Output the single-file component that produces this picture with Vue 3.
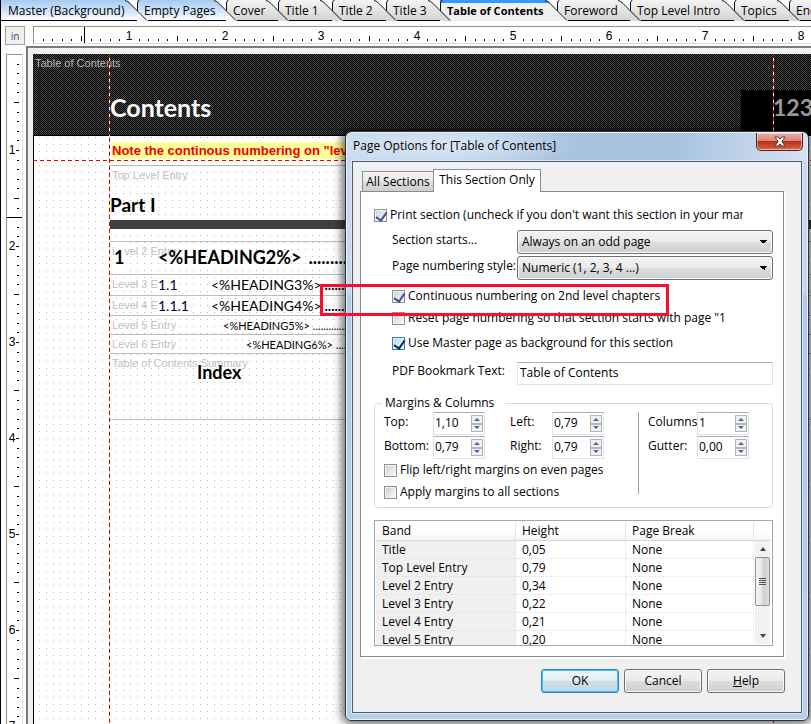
<script setup>
import { ref } from 'vue'

const docTabs = [
  { name: 'Master (Background)', width: 136, kind: 'blue' },
  { name: 'Empty Pages', width: 89, kind: 'blue' },
  { name: 'Cover', width: 52, kind: 'grey' },
  { name: 'Title 1', width: 54, kind: 'grey' },
  { name: 'Title 2', width: 54, kind: 'grey' },
  { name: 'Title 3', width: 54, kind: 'grey' },
  { name: 'Table of Contents', width: 117, kind: 'active' },
  { name: 'Foreword', width: 73, kind: 'grey' },
  { name: 'Top Level Intro', width: 104, kind: 'grey' },
  { name: 'Topics', width: 55, kind: 'grey' },
  { name: 'Endnotes', width: 90, kind: 'grey' }
]
const feet = { blue: '#f4f9ff', grey: '#d8d8d8', active: '#f0f0f0' }

// ten ticks to the inch at 96 px; every tenth is a number, every fifth a long tick
const ticks = Array.from({ length: 120 }, (_, i) => ({ n: i + 1, at: Math.round((i + 1) * 9.6) }))

const entries = [
  { cls: 'lv2', label: 'Level 2 Entry', num: '1', text: '<%HEADING2%>' },
  { cls: 'lv3', label: 'Level 3 Entry', num: '1.1', text: '<%HEADING3%>' },
  { cls: 'lv4', label: 'Level 4 Entry', num: '1.1.1', text: '<%HEADING4%>' },
  { cls: 'lv5', label: 'Level 5 Entry', num: '', text: '<%HEADING5%>' },
  { cls: 'lv6', label: 'Level 6 Entry', num: '', text: '<%HEADING6%>' }
]
const leader = '.'.repeat(60)

const bands = [
  ['Title', '0,05', 'None'],
  ['Top Level Entry', '0,79', 'None'],
  ['Level 2 Entry', '0,34', 'None'],
  ['Level 3 Entry', '0,22', 'None'],
  ['Level 4 Entry', '0,21', 'None'],
  ['Level 5 Entry', '0,20', 'None']
]

const spins = [
  { id: 'm-top', label: 'Top:', value: '1,10', area: 'a' },
  { id: 'm-left', label: 'Left:', value: '0,79', area: 'b' },
  { id: 'm-cols', label: 'Columns:', value: '1', area: 'c' },
  { id: 'm-bottom', label: 'Bottom:', value: '0,79', area: 'a' },
  { id: 'm-right', label: 'Right:', value: '0,79', area: 'b' },
  { id: 'm-gutter', label: 'Gutter:', value: '0,00', area: 'c' }
]

const printSection = ref(true)
const continuous = ref(true)
const reset = ref(false)
const useMaster = ref(true)
const flip = ref(false)
const applyAll = ref(false)
const bookmark = ref('Table of Contents')
</script>

<template>
  <div class="app">
    <nav class="doc-tabs">
      <button v-for="t in docTabs" :key="t.name" class="doc-tab" :class="t.kind" :style="{ width: t.width + 'px' }">
        {{ t.name }}
        <svg class="slant" width="24" height="21" viewBox="0 0 24 21">
          <path d="M0 0H12V11L5 3Q3 1 0 0Z" fill="#fcfcfc" />
          <path d="M12 9L23 20V21H12Z" :fill="feet[t.kind]" />
          <path d="M0 0.5Q3 1 5 3.5L22 20.5" fill="none" stroke="#111" />
          <path d="M12.5 11V3Q12.5 1 14.5 0" fill="none" stroke="#111" />
        </svg>
      </button>
    </nav>

    <div class="top-ruler-row">
      <button class="unit">in</button>
      <svg class="h-ruler" height="18">
        <g v-for="t in ticks" :key="t.n">
          <text v-if="t.n % 10 === 0" :x="t.at - 1" y="13" text-anchor="middle" class="rule-num">{{ t.n / 10 }}</text>
          <rect v-else-if="t.n % 5 === 0" :x="t.at - 1" y="9" width="1" height="5" />
          <rect v-else :x="t.at - 1" y="12" width="1" height="2" />
        </g>
        <rect x="50" y="0" width="1" height="18" />
      </svg>
    </div>

    <div class="work">
      <svg class="v-ruler" width="17">
        <g v-for="t in ticks" :key="t.n">
          <text v-if="t.n % 10 === 0" x="5" :y="t.at + 3" text-anchor="middle" class="rule-num">{{ t.n / 10 }}</text>
          <rect v-if="t.n % 10 === 0" x="9" :y="t.at - 1" width="3" height="1" />
          <rect v-else-if="t.n % 5 === 0" x="7" :y="t.at - 1" width="5" height="1" />
          <rect v-else x="10" :y="t.at - 1" width="2" height="1" />
        </g>
        <rect x="0" y="162" width="17" height="1" />
      </svg>

      <main class="canvas">
        <div class="page">
          <header class="band-title">
            <span class="tag">Table of Contents</span>
            <h1>Contents</h1>
            <span class="page-no">123</span>
          </header>
          <div class="body">
            <div class="note-band"><mark>Note the continous numbering on "level 2" chapters</mark></div>
            <section class="band top-band">
              <span class="label">Top Level Entry</span>
              <h2>Part I</h2>
              <div class="bar"></div>
            </section>
            <section v-for="e in entries" :key="e.cls" class="band entry" :class="e.cls">
              <span class="label">{{ e.label }}</span>
              <span class="num"><b>{{ e.num }}</b></span>
              <span class="text">{{ e.text }}</span>
              <span class="leader">{{ leader }}</span>
            </section>
            <section class="band summary">
              <span class="label">Table of Contents Summary</span>
              <h2>Index</h2>
            </section>
            <section class="band"></section>
          </div>
          <i class="guide left"></i>
          <i class="guide right"></i>
          <i class="guide across"></i>
        </div>
      </main>
    </div>

    <div class="dialog" role="dialog" aria-labelledby="dlg-title">
      <div class="titlebar">
        <span id="dlg-title">Page Options for [Table of Contents]</span>
        <button class="close" aria-label="Close">
          <svg width="12" height="11" viewBox="0 0 12 11">
            <path d="M1 1H4.2L6 3.2 7.8 1H11L7.8 5.5 11 10H7.8L6 7.8 4.2 10H1L4.2 5.5Z" fill="#fff" stroke="#4a3f48" />
          </svg>
        </button>
      </div>
      <div class="client">
        <div class="tabs" role="tablist">
          <button role="tab" aria-selected="false" class="tab">All Sections</button>
          <button role="tab" aria-selected="true" class="tab on">This Section Only</button>
        </div>
        <div class="panel">
          <label class="check r26"><input v-model="printSection" type="checkbox" /><span class="clip-print">Print section (uncheck if you don't want this section in your manual)</span></label>
          <div class="field">
            <label for="starts">Section starts...</label>
            <select id="starts"><option>Always on an odd page</option></select>
          </div>
          <div class="field">
            <label for="style">Page numbering style:</label>
            <select id="style"><option>Numeric (1, 2, 3, 4 ...)</option></select>
          </div>
          <div class="checks">
            <label class="check"><input v-model="continuous" type="checkbox" /><span>Continuous numbering on 2nd level chapters</span></label>
            <label class="check"><input v-model="reset" type="checkbox" /><span class="clip-reset">Reset page numbering so that section starts with page "1"</span></label>
            <label class="check r28"><input v-model="useMaster" type="checkbox" class="hot" /><span>Use Master page as background for this section</span></label>
          </div>
          <div class="field r30">
            <label for="bookmark">PDF Bookmark Text:</label>
            <input id="bookmark" v-model="bookmark" type="text" class="box" />
          </div>

          <fieldset>
            <legend>Margins &amp; Columns</legend>
            <div class="spins">
              <div v-for="s in spins" :key="s.id" class="spin" :class="s.area">
                <label :for="s.id">{{ s.label }}</label>
                <div class="box spinner">
                  <input :id="s.id" type="text" :value="s.value" />
                  <span class="arrows">
                    <button aria-label="Increase"><svg width="6" height="3"><path d="M0 3L3 0L6 3Z" fill="#4a63ae" /></svg></button>
                    <button aria-label="Decrease"><svg width="6" height="3"><path d="M0 0L3 3L6 0Z" fill="#4a63ae" /></svg></button>
                  </span>
                </div>
              </div>
            </div>
            <label class="check"><input v-model="flip" type="checkbox" /><span>Flip left/right margins on even pages</span></label>
            <label class="check"><input v-model="applyAll" type="checkbox" /><span class="clip-apply">Apply margins to all sections</span></label>
          </fieldset>

          <div class="list">
            <table>
              <thead>
                <tr><th>Band</th><th>Height</th><th>Page Break</th><th class="end"></th></tr>
              </thead>
              <tbody>
                <tr v-for="b in bands" :key="b[0]"><td v-for="(c, i) in b" :key="i">{{ c }}</td><td class="end"></td></tr>
              </tbody>
            </table>
            <div class="scroll">
              <svg width="6" height="4"><path d="M0 4L3 0L6 4Z" fill="#444" /></svg>
              <div class="thumb"><i></i><i></i><i></i><i></i></div>
              <svg width="6" height="4"><path d="M0 0L3 4L6 0Z" fill="#444" /></svg>
            </div>
          </div>
        </div>
        <div class="actions">
          <button class="btn default">OK</button>
          <button class="btn">Cancel</button>
          <button class="btn"><u>H</u>elp</button>
        </div>
      </div>
    </div>
    <div class="highlight"></div>
  </div>
</template>

<style>
body {
  margin: 0;
}
</style>

<style scoped>
* {
  box-sizing: border-box;
}
.app {
  position: relative;
  display: flex;
  flex-direction: column;
  height: 100vh;
  overflow: hidden;
  background: #fcfcfc;
  border-left: 1px solid #000;
  font: 12px/16px "Open Sans", "Noto Sans", sans-serif;
  color: #000;
}
button,
input,
select {
  font: inherit;
  color: inherit;
  margin: 0;
  padding: 0;
}
h1,
h2 {
  margin: 0;
  font-family: Lato, sans-serif;
}

/* document tabs */
.doc-tabs {
  display: flex;
  flex: none;
  height: 21px;
  overflow: hidden;
}
.doc-tab {
  position: relative;
  flex: none;
  border: 0;
  border-bottom: 1px solid #000;
  padding: 1px 0 0 7px;
  text-align: left;
  white-space: nowrap;
  background: linear-gradient(#f4f4f4, #d4d4d4);
}
.doc-tab.blue {
  background: linear-gradient(#a4caf2, #f8fbff);
}
.doc-tab.active {
  background: linear-gradient(#3399ff 3px, #f0f0f0 3px);
  border-bottom-color: #f0f0f0;
  font-size: 11px;
  font-weight: 700;
}
.slant {
  position: absolute;
  z-index: 1;
  right: -12px;
  top: 0;
}

/* rulers */
.top-ruler-row {
  display: flex;
  flex: none;
  height: 25px;
  padding: 5px 0 0 4px;
  align-items: flex-start;
}
.unit {
  width: 20px;
  height: 19px;
  margin-right: 8px;
  flex: none;
  border: 1px solid #a0a0a0;
  background: #f0f0f0;
  color: #1c4f82;
  font-size: 10px;
  line-height: 14px;
}
.h-ruler {
  flex: 1;
  min-width: 0;
  background: #fff;
  border-top: 1px solid #909090;
  border-left: 1px solid #909090;
  border-bottom: 1px solid #e3e3e3;
}
.rule-num {
  font: 12px "Liberation Sans", sans-serif;
}
.work {
  display: flex;
  flex: 1;
  min-height: 0;
  padding-left: 5px;
}
.v-ruler {
  flex: none;
  height: 100%;
  margin: 8px 3px 0 0;
  background: #fff;
  border-top: 1px solid #909090;
  border-left: 1px solid #909090;
  border-right: 1px solid #e3e3e3;
}

/* page canvas */
.canvas {
  flex: 1;
  min-width: 0;
  border-top: 2px solid #7a7a7a;
  border-left: 2px solid #7a7a7a;
  background: #f0f0f0;
  padding: 6px 0 0 5px;
}
.page {
  position: relative;
  height: 100%;
  display: flex;
  flex-direction: column;
}
.band-title {
  position: relative;
  flex: none;
  height: 82px;
  border-bottom: 1px dotted #000;
  background: repeating-conic-gradient(#000 0 25%, #444 0 50%) 0 0 / 2px 2px;
  color: #fff;
}
.band-title h1 {
  padding: 38px 0 0 77px;
  font-size: 25px;
  line-height: 30px;
}
.tag {
  position: absolute;
  left: 2px;
  top: 2px;
  font: 11px/14px "Liberation Sans", sans-serif;
  color: #b8b8b8;
}
.page-no {
  position: absolute;
  right: -7px;
  bottom: 0;
  width: 77px;
  height: 45px;
  padding-left: 32px;
  background: #000;
  color: #989898;
  font: 700 23px/35px Lato, sans-serif;
}
.body {
  flex: 1;
  display: flex;
  flex-direction: column;
  padding-left: 76px;
  border-left: 1px solid #000;
  background: #fff radial-gradient(circle at 0 0, #b8b8b8 0 1px, transparent 1px) 5px 1px / 7px 7px;
}
.note-band {
  height: 29px;
  padding: 6px 0 0 2px;
  white-space: nowrap;
  overflow: hidden;
}
.note-band mark {
  display: inline-block;
  background: #ffff99;
  color: #f00000;
  font: 700 13px/17px "Liberation Sans", sans-serif;
}
.band {
  position: relative;
  border-top: 1px solid #bdbdbd;
}
.label {
  position: absolute;
  left: 2px;
  top: 3px;
  font: 11px/13px "Liberation Sans", sans-serif;
  color: #c0c0c0;
}
.top-band {
  height: 76px;
  padding-top: 27px;
}
.band h2 {
  position: relative;
  font-size: 19px;
  line-height: 24px;
}
.bar {
  margin-top: 3px;
  height: 9px;
  background: #404040;
}
.entry {
  display: flex;
  font-family: Lato, sans-serif;
  white-space: nowrap;
  overflow: hidden;
}
.entry > span {
  z-index: 1;
}
.entry > .label {
  z-index: 0;
}
.num b {
  display: inline-block;
  font-weight: inherit;
  background: #fff;
}
.leader {
  margin-left: 7px;
}
.lv2 {
  height: 33px;
  padding-left: 4px;
  font-size: 18px;
  line-height: 31px;
  font-weight: 700;
}
.lv2 .num {
  width: 44px;
}
.lv3 {
  height: 21px;
}
.lv4 {
  height: 20px;
}
.lv3,
.lv4 {
  padding-left: 48px;
  font-size: 14px;
  line-height: 20px;
}
.lv3 .num,
.lv4 .num {
  width: 53px;
  color: #00003c;
}
.lv3 .leader,
.lv4 .leader {
  margin-left: 3px;
  font-weight: 700;
}
.lv5,
.lv6 {
  height: 19px;
  font-size: 11px;
  line-height: 19px;
}
.lv5 {
  padding-left: 113px;
}
.lv6 {
  padding-left: 136px;
}
.lv5 .leader,
.lv6 .leader {
  margin-left: 3px;
}
.summary {
  height: 66px;
  padding: 6px 0 0 87px;
}
.summary h2 {
  font-size: 18px;
}
.guide {
  position: absolute;
}
.guide.left,
.guide.right {
  top: 0;
  bottom: 0;
  width: 1px;
  background: linear-gradient(#fff, #fff) top / 1px 82px no-repeat;
}
.guide.left::after,
.guide.right::after {
  content: "";
  position: absolute;
  inset: 0;
  background: repeating-linear-gradient(#e00000 0 4px, transparent 4px 7px);
}
.guide.left {
  left: 76px;
}
.guide.right {
  right: 37px;
}
.guide.across {
  left: 0;
  right: 0;
  top: 106px;
  height: 1px;
  background: repeating-linear-gradient(90deg, #e00000 0 4px, transparent 4px 7px);
}

/* dialog window */
.dialog {
  position: absolute;
  z-index: 2;
  top: 131px;
  right: 2px;
  width: 464px;
  padding: 0 6px 7px;
  border: 1px solid #2b3440;
  border-radius: 7px 7px 6px 6px;
  background: linear-gradient(#c9dbee 0, #c5d8ec 160px, #afcbe7 165px, #b4cfea 100%);
  box-shadow: inset 0 0 0 1px #e9f2fb, 0 0 10px 3px rgba(0, 0, 0, 0.6);
}
.titlebar {
  display: flex;
  justify-content: space-between;
  height: 28px;
  margin: 1px -5px 0;
  padding: 0 4px 0 6px;
  border-radius: 6px 6px 0 0;
  background: radial-gradient(ellipse 130px 24px at 100px 12px, #dce8f5, transparent), linear-gradient(90deg, #c9dbee, #a9c4e1 45%, #a7c2df 70%, #d3e1f0);
  line-height: 26px;
}
.close {
  width: 47px;
  height: 18px;
  border: 1px solid #5c1c1c;
  border-top: 0;
  border-radius: 0 0 5px 5px;
  background: linear-gradient(#e9b0a4, #d98575 45%, #b8301c 50%, #cf5a3c 90%, #e08a6a);
  box-shadow: inset 0 0 0 1px rgba(255, 255, 255, 0.45);
  display: flex;
  align-items: center;
  justify-content: center;
}
.client {
  border: 1px solid #4e5d70;
  background: #f0f0f0;
  padding: 7px 17px 19px 7px;
  box-shadow: 0 0 0 1px #d9e7f5;
}
.tabs {
  display: flex;
  align-items: flex-end;
  padding-left: 2px;
}
.tab {
  width: 71px;
  height: 20px;
  border: 1px solid #8c8f98;
  border-width: 1px 0 0 1px;
  background: linear-gradient(#f3f3f3, #ebebeb 48%, #dcdcdc 52%, #cfcfcf);
  white-space: nowrap;
}
.tab.on {
  width: 108px;
  height: 23px;
  margin-bottom: -1px;
  border-width: 1px 1px 0 1px;
  background: #fff;
  padding-bottom: 2px;
  position: relative;
}
.panel {
  border: 1px solid #868a94;
  background: #fff;
  padding: 11px 10px 10px 13px;
  box-shadow: 2px 2px 0 #fff;
}
.check {
  display: flex;
  align-items: center;
  height: 22px;
  padding-bottom: 2px;
  gap: 3px;
  white-space: nowrap;
}
.check span {
  overflow: hidden;
}
.r26 {
  height: 26px;
}
.check.r28 {
  height: 28px;
}
.clip-print {
  width: 353px;
}
.clip-reset {
  width: 317px;
}
.clip-apply {
  width: 163px;
}
.check input {
  appearance: none;
  flex: none;
  width: 13px;
  height: 13px;
  border: 1px solid #8e8f8f;
  background: linear-gradient(135deg, #cdd1d6, #f8f8f8) content-box, #f4f4f4;
  padding: 1px;
  position: relative;
}
.check input.hot {
  border-color: #3c7fb1;
  background: linear-gradient(135deg, #b4dcf5, #eef8fe) content-box, #dff1fc;
}
.check input:checked::after {
  content: "";
  position: absolute;
  left: 3px;
  top: 0;
  width: 5px;
  height: 9px;
  border: solid #3e5499;
  border-width: 0 2px 2px 0;
  transform: rotate(35deg);
}
.check input.hot:checked::after {
  border-color: #0b2a66;
}
.field {
  display: grid;
  grid-template-columns: 125px 1fr;
  align-items: center;
  height: 26px;
  padding-left: 18px;
}
.field.r30 {
  height: 30px;
}
.field label {
  padding-bottom: 4px;
  white-space: nowrap;
}
select {
  appearance: none;
  height: 24px;
  width: 100%;
  padding: 0 20px 0 4px;
  border: 1px solid #707070;
  border-radius: 3px;
  box-shadow: inset 0 0 0 1px #fafafa;
  background:
    linear-gradient(to bottom left, #000 50%, transparent 50%) right 8px center / 4px 4px no-repeat,
    linear-gradient(to bottom right, #000 50%, transparent 50%) right 4px center / 4px 4px no-repeat,
    linear-gradient(#f2f2f2, #ebebeb 48%, #dddddd 50%, #cfcfcf);
}
.checks {
  padding: 5px 0 0 18px;
}
.box {
  height: 23px;
  width: 100%;
  border: 1px solid #dfe2ea;
  border-top-color: #abadb3;
  border-radius: 1px;
  background: #fff;
}
input.box {
  padding: 0 2px 2px;
}
fieldset {
  margin: 7px 0 0;
  padding: 1px 9px 3px;
  border: 1px solid #d0dde9;
  border-radius: 4px;
  min-width: 0;
}
legend {
  padding: 0 11px 0 3px;
  margin-left: -2px;
}
.spins {
  display: grid;
  grid-template-columns: 126px 129px 111px;
  grid-auto-rows: 24px;
  position: relative;
}
.spins::after {
  content: "";
  position: absolute;
  left: 254px;
  top: 0;
  height: 82px;
  width: 1px;
  background: #a0a0a0;
}
.spin {
  display: grid;
  grid-template-columns: 49px 52px;
  align-items: start;
}
.spin.b {
  grid-template-columns: 42px 52px;
}
.spin.c {
  padding-left: 9px;
}
.spin label {
  padding-top: 2px;
  white-space: nowrap;
}
.spinner {
  display: flex;
  position: relative;
}
.spinner input {
  width: 37px;
  border: 0;
  padding: 0 0 2px 1px;
  background: none;
}
.arrows {
  display: flex;
  flex-direction: column;
  width: 12px;
  margin: 2px 0;
}
.arrows button {
  flex: 1;
  border: 1px solid #b4b4b4;
  background: #f1f1f1;
  display: flex;
  align-items: center;
  justify-content: center;
  min-height: 0;
}

/* band list */
.list {
  position: relative;
  height: 126px;
  margin-top: 12px;
  padding: 1px;
  border: 1px solid #a3a6ac;
  overflow: hidden;
}
table {
  width: 100%;
  table-layout: fixed;
  border-collapse: separate;
  border-spacing: 0;
}
th,
td {
  height: 18px;
  padding: 0 0 0 6px;
  text-align: left;
  font-weight: 400;
  line-height: 17px;
  border-right: 1px dotted #e0e0e0;
  border-bottom: 1px dotted #e0e0e0;
}
th {
  background: linear-gradient(#fff 50%, #f4f5f7);
  border-right: 1px solid #e2e4e8;
  border-bottom: 1px solid #d5d5d5;
  line-height: 18px;
}
th:nth-child(1) {
  width: 140px;
}
th:nth-child(2) {
  width: 110px;
}
th.end {
  width: 17px;
  border-right: 0;
}
td.end {
  border: 0;
}
td:first-child {
  background: #f0f0f0;
}
.scroll {
  position: absolute;
  right: 2px;
  top: 20px;
  bottom: 1px;
  width: 15px;
  display: flex;
  flex-direction: column;
  align-items: center;
  background: #f2f2f2;
  padding: 6px 0;
}
.thumb {
  width: 15px;
  height: 49px;
  margin: 6px 0 auto;
  border: 1px solid #8f8f8f;
  border-radius: 2px;
  background: linear-gradient(90deg, #f5f5f5, #e6e6e8 45%, #cfcfd3 55%, #dcdce0);
  display: flex;
  flex-direction: column;
  align-items: center;
  justify-content: center;
  gap: 1px;
}
.thumb i {
  width: 7px;
  height: 1px;
  background: #555;
}

.actions {
  display: flex;
  justify-content: flex-end;
  gap: 5px;
  padding-top: 12px;
  margin-right: -1px;
}
.btn {
  width: 78px;
  height: 24px;
  border: 1px solid #707070;
  border-radius: 3px;
  background: linear-gradient(#f2f2f2, #ebebeb 48%, #dddddd 50%, #cfcfcf);
  box-shadow: inset 0 0 0 1px #fafafa;
}
.btn.default {
  border-color: #3c7fb1;
  box-shadow: inset 0 0 0 1px #35c8f5;
  background: linear-gradient(#eef5f8, #e2eef3 48%, #cfdfe8 50%, #c4d6df);
}
.highlight {
  position: absolute;
  z-index: 3;
  top: 284px;
  right: 142px;
  width: 349px;
  height: 32px;
  border: 3px solid #fb0d33;
}
</style>
